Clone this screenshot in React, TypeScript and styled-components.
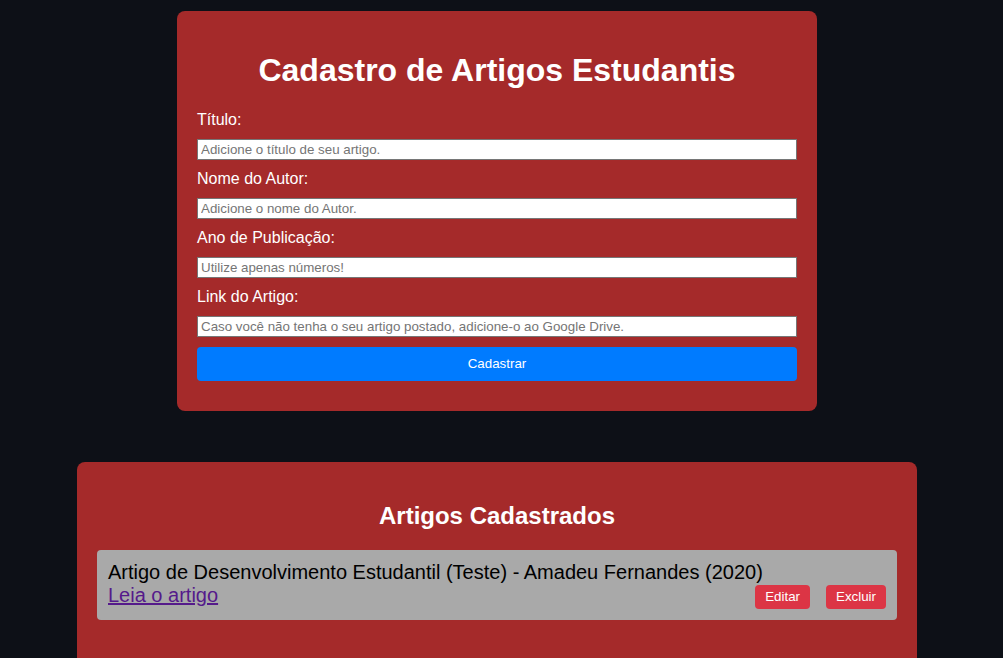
import React from "react";
import styled, { createGlobalStyle } from "styled-components";

const Global = createGlobalStyle`
  html, body { margin: 0; padding: 0; background: #0d1017; }
  body { font-family: "Liberation Sans", Arial, sans-serif; color: #fff; }
`;

const Page = styled.div`
  padding: 11px 9px 0 0;
  min-height: 647px;
  background: #0d1017;
`;

const Card = styled.div<{ $width: number; $bottom: number }>`
  width: ${(p) => p.$width}px;
  box-sizing: border-box;
  margin: 0 auto 51px;
  padding: 20px 20px ${(p) => p.$bottom}px;
  background: #a52a2a;
  border-radius: 8px;
`;

const Title = styled.h1`
  margin: 21.44px 0;
  font-size: 32px;
  font-weight: bold;
  text-align: center;
  line-height: normal;
`;

const Subtitle = styled.h2`
  margin: 19.92px 0;
  font-size: 24px;
  font-weight: bold;
  text-align: center;
  line-height: normal;
`;

const Label = styled.label`
  display: block;
  font-size: 16px;
  line-height: 18.4px;
  margin-bottom: 10px;
`;

const Input = styled.input`
  display: block;
  width: 100%;
  box-sizing: border-box;
  height: 20.6px;
  margin: 0 0 10px;
  padding: 1px 3px;
  border: 1px solid #767676;
  font-family: "Liberation Sans", Arial, sans-serif;
  font-size: 13.33px;
  color: #000;
  background: #fff;
  &::placeholder { color: #757575; }
`;

const SubmitButton = styled.button`
  display: block;
  width: 100%;
  height: 34px;
  border: none;
  border-radius: 4px;
  background: #007bff;
  color: #fff;
  font-family: "Liberation Sans", Arial, sans-serif;
  font-size: 13.33px;
`;

const Item = styled.div`
  display: grid;
  grid-template-columns: 1fr auto;
  padding: 10px 11px 11px 11px;
  background: #a9a9a9;
  border-radius: 4px;
  color: #000;
  font-size: 20px;
  line-height: 23px;
`;

const ItemText = styled.div`
  grid-column: 1 / -1;
  white-space: nowrap;
  padding-top: 1px;
`;

const Link = styled.a`
  justify-self: start;
  color: #551a8b;
  text-decoration: underline;
`;

const Actions = styled.div`
  display: flex;
  gap: 16px;
  margin: 1px 0 0;
`;

const ActionButton = styled.button`
  height: 24px;
  padding: 0 10px;
  border: none;
  border-radius: 4px;
  background: #dc3545;
  color: #fff;
  font-family: "Liberation Sans", Arial, sans-serif;
  font-size: 13.33px;
`;

const fields = [
  { label: "Título:", ph: "Adicione o título de seu artigo." },
  { label: "Nome do Autor:", ph: "Adicione o nome do Autor." },
  { label: "Ano de Publicação:", ph: "Utilize apenas números!" },
  { label: "Link do Artigo:", ph: "Caso você não tenha o seu artigo postado, adicione-o ao Google Drive." },
];

export default function App() {
  return (
    <>
      <Global />
      <Page>
        <Card $width={640} $bottom={30}>
          <Title>Cadastro de Artigos Estudantis</Title>
          {fields.map((f) => (
            <React.Fragment key={f.label}>
              <Label>{f.label}</Label>
              <Input placeholder={f.ph} />
            </React.Fragment>
          ))}
          <SubmitButton>Cadastrar</SubmitButton>
        </Card>
        <Card $width={840} $bottom={50}>
          <Subtitle>Artigos Cadastrados</Subtitle>
          <Item>
            <ItemText>
              Artigo de Desenvolvimento Estudantil (Teste) - Amadeu Fernandes (2020)
            </ItemText>
            <Link href="#">Leia o artigo</Link>
            <Actions>
              <ActionButton>Editar</ActionButton>
              <ActionButton>Excluir</ActionButton>
            </Actions>
          </Item>
        </Card>
      </Page>
    </>
  );
}
